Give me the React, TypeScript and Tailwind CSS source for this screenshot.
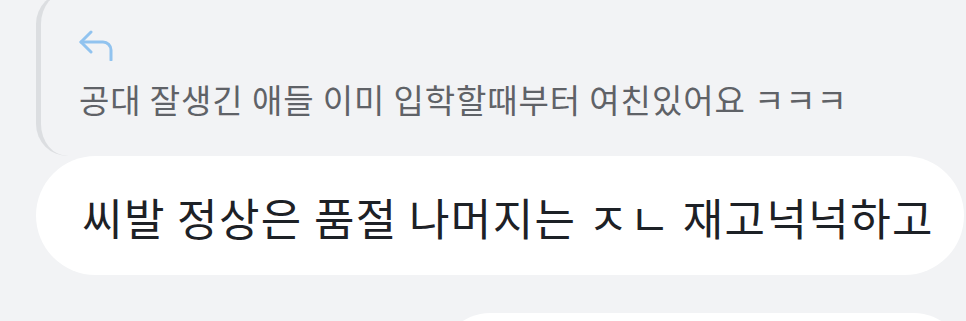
export default function App() {
  return (
    <div className="w-[966px] h-[321px] overflow-hidden bg-[#f2f3f5] font-['Noto_Sans_CJK_KR','Noto_Sans',sans-serif]">
      {/* quoted message */}
      <div className="ml-[36px] -mt-[8px] h-[164px] rounded-l-[32px] border-l-[5px] border-[#dcdee1] pl-[38px] pt-[35px]">
        <svg width="34" height="34" viewBox="0 0 34 34" fill="none" stroke="#91c3ef" strokeWidth="3" strokeLinecap="round" strokeLinejoin="round">
          <path d="M12 5 L2 15 L12 25" />
          <path d="M2 15 H24 A8 8 0 0 1 32 23 V33" />
        </svg>
        <p className="mt-[18px] text-[33px] leading-[40px] tracking-[0.9px] text-[#5f6267] whitespace-nowrap">
          공대 잘생긴 애들 이미 입학할때부터 여친있어요 ㅋㅋㅋ
        </p>
      </div>

      {/* reply bubble */}
      <div className="ml-[36px] mr-[2px] h-[119px] rounded-full bg-white flex items-center pl-[46px]">
        <p className="mt-[2px] text-[44px] leading-[52px] tracking-[1.4px] text-[#1d2126] whitespace-nowrap">
          씨발 정상은 품절 나머지는 ㅈㄴ 재고넉넉하고
        </p>
      </div>

      {/* next bubble */}
      <div className="mt-[38px] ml-[440px] mr-[2px] h-[100px] rounded-full bg-white" />
    </div>
  );
}
